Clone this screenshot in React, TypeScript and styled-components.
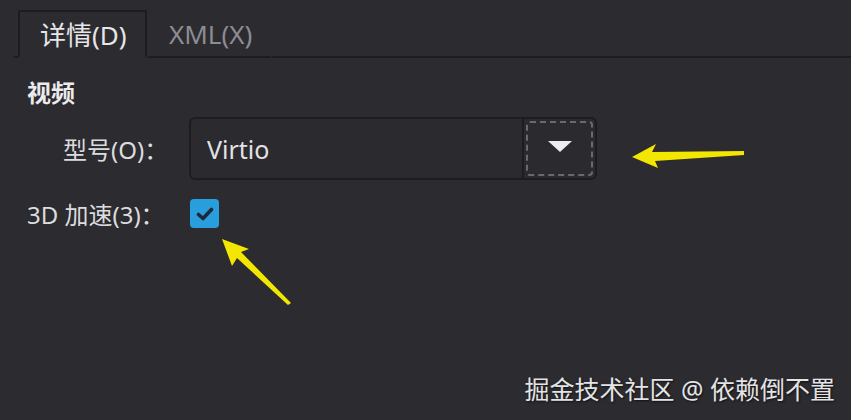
import styled, { createGlobalStyle } from "styled-components";

const GlobalStyle = createGlobalStyle`
  html, body {
    margin: 0;
    padding: 0;
    background: #2c2b30;
  }
  body {
    font-family: "Noto Sans", "Noto Sans CJK SC", sans-serif;
  }
`

const App = () => {
  return (
    <>
      <GlobalStyle />
      <StyledPage>
        <StyledTabBar>
          <StyledTabGap width={4} />
          <StyledTab active>详情(D)</StyledTab>
          <StyledTab>XML(X)</StyledTab>
          <StyledTabGap />
        </StyledTabBar>
        <StyledContent>
          <StyledSection>视频</StyledSection>
          <StyledForm>
            <StyledLabel indent>型号(O)：</StyledLabel>
            <StyledCombo>
              <StyledComboValue>Virtio</StyledComboValue>
              <StyledComboButton>
                <StyledFocusRing>
                  <StyledTriangle />
                </StyledFocusRing>
              </StyledComboButton>
            </StyledCombo>
            <StyledLabel>3D 加速(3)：</StyledLabel>
            <StyledCheckbox>
              <svg width="18" height="14" viewBox="0 0 18 14">
                <path d="M2.5 7.5 L7 11.5 L15.5 2.5" fill="none" stroke="#1d2838" strokeWidth="3.6" strokeLinecap="round" strokeLinejoin="round" />
              </svg>
            </StyledCheckbox>
          </StyledForm>
        </StyledContent>
        <StyledWatermark>掘金技术社区 @ 依赖倒不置</StyledWatermark>
        <StyledArrows width="851" height="420" viewBox="0 0 851 420">
          <polygon fill="#f3e600" points="632,157 656,144 652,152 744,151 744,155 655,161 658,168" />
          <polygon fill="#f3e600" points="222,239 249,249 241,252 291,303 288,305 237,258 232,266" />
        </StyledArrows>
      </StyledPage>
    </>
  );
}

export default App;

const StyledPage = styled.div`
  position: relative;
  width: 851px;
  height: 420px;
  overflow: hidden;
  background: #2c2b30;
  padding-top: 10px;
  box-sizing: border-box;
`

const StyledTabBar = styled.div`
  display: flex;
  margin-left: 14px;
  height: 48px;
`

const StyledTabGap = styled.div<{ width?: number }>`
  flex: ${p => p.width ? `0 0 ${p.width}px` : "1"};
  border-bottom: 2px solid #1d1c20;
`

const StyledTab = styled.div<{ active?: boolean }>`
  display: flex;
  align-items: center;
  box-sizing: border-box;
  padding: 0 18px 0 20px;
  font-size: 26px;
  white-space: nowrap;
  color: ${p => p.active ? "#e6e6e8" : "#8d8c92"};
  border: 2px solid ${p => p.active ? "#1d1c20" : "transparent"};
  border-bottom: 2px solid ${p => p.active ? "transparent" : "#1d1c20"};
  border-radius: 2px 2px 0 0;
  min-width: ${p => p.active ? "129px" : "0"};
`

const StyledContent = styled.div`
  padding: 20px 0 0 27px;
`

const StyledSection = styled.div`
  font-size: 24px;
  font-weight: bold;
  color: #ebebed;
  line-height: 30px;
`

const StyledForm = styled.div`
  display: grid;
  grid-template-columns: 162px auto;
  align-items: center;
  row-gap: 16px;
  margin-top: 9px;
`

const StyledLabel = styled.div<{ indent?: boolean }>`
  font-size: 24px;
  color: #dcdcde;
  padding-left: ${p => p.indent ? 36 : 0}px;
  white-space: nowrap;
`

const StyledCombo = styled.div`
  display: flex;
  width: 408px;
  height: 63px;
  box-sizing: border-box;
  border: 2px solid #1d1c20;
  border-radius: 6px;
  background: #2b2a2f;
  overflow: hidden;
`

const StyledComboValue = styled.div`
  flex: 1;
  display: flex;
  align-items: center;
  padding-left: 16px;
  font-size: 25px;
  color: #e2e2e4;
`

const StyledComboButton = styled.div`
  width: 73px;
  border-left: 2px solid #1d1c20;
  padding: 2px;
  box-sizing: border-box;
  display: flex;
`

const StyledFocusRing = styled.div`
  flex: 1;
  border: 2px dashed #6a696f;
  border-radius: 4px;
  display: flex;
  align-items: center;
  justify-content: center;
`

const StyledTriangle = styled.div`
  width: 0;
  height: 0;
  border-left: 12px solid transparent;
  border-right: 12px solid transparent;
  border-top: 11px solid #ededee;
  margin-bottom: 4px;
`

const StyledCheckbox = styled.div`
  width: 29px;
  height: 29px;
  margin-left: 1px;
  border-radius: 4px;
  background: #289fdc;
  display: flex;
  align-items: center;
  justify-content: center;
`

const StyledWatermark = styled.div`
  position: absolute;
  right: 16px;
  bottom: 14px;
  font-size: 25px;
  color: #e4e4e6;
  text-shadow: 1px 1px 2px #111;
`

const StyledArrows = styled.svg`
  position: absolute;
  left: 0;
  top: 0;
  pointer-events: none;
`
